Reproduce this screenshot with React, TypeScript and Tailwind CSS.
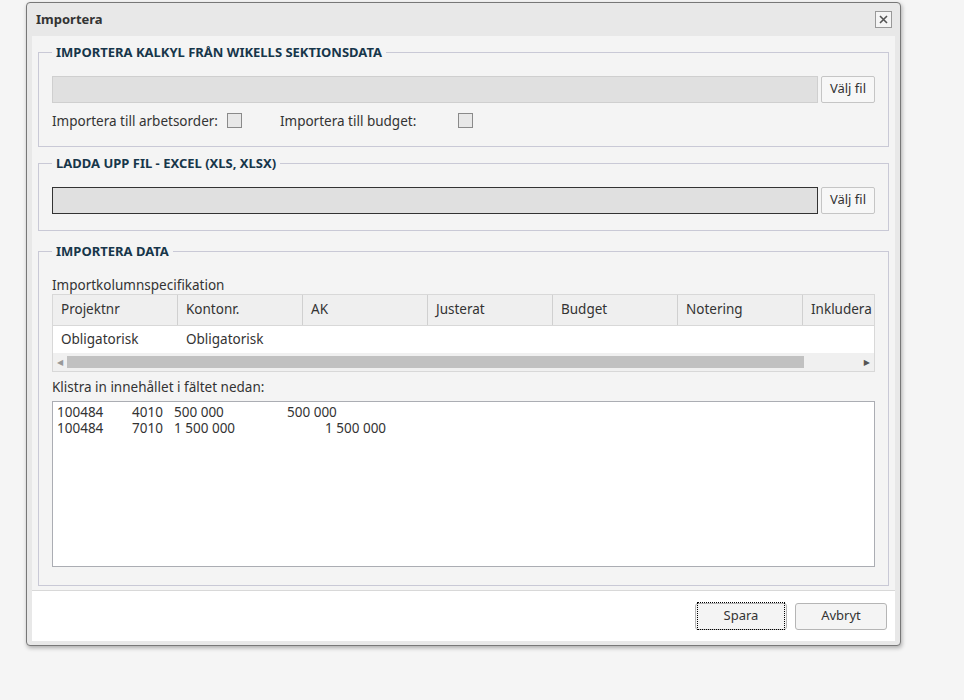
import React from 'react'

const cols = ['Projektnr', 'Kontonr.', 'AK', 'Justerat', 'Budget', 'Notering', 'Inkludera …']

function Fs({ title, className, children }: { title: string; className?: string; children: React.ReactNode }) {
  return (
    <fieldset className={`min-w-0 border border-[#c9c9d6] mx-[6px] px-[13px] ${className ?? ''}`}>
      <legend className="px-[4px] font-bold text-[13px] text-[#17364a]">{title}</legend>
      {children}
    </fieldset>
  )
}

function Btn({ label, focus }: { label: string; focus?: boolean }) {
  return (
    <button className="h-[27px] w-[92px] rounded-[3px] border border-[#b5b5b5] bg-[#f4f4f4] text-[13px] text-[#333] flex items-center justify-center">
      <span className={focus ? 'outline outline-1 outline-dotted outline-black px-[26px] py-[3px]' : ''}>{label}</span>
    </button>
  )
}

function Btn2() {
  return (
    <button className="w-[54px] h-[27px] border border-[#c5c5c5] rounded-[2px] bg-[#f7f7f7] text-[13px] text-[#333]">Välj fil</button>
  )
}

export default function App() {
  return (
    <div className="w-[964px] h-[700px] bg-[#f5f5f5] pt-[2px] pl-[26px]" style={{ fontFamily: '"Noto Sans", "DejaVu Sans", sans-serif' }}>
      <div className="w-[875px] h-[644px] border border-[#777] rounded-[4px] bg-[#e8e8e8] shadow-[1px_2px_4px_rgba(0,0,0,0.3)] flex flex-col">
        <div className="h-[33px] flex items-center justify-between pl-[9px] pr-[8px]">
          <span className="text-[13px] font-bold text-[#333]">Importera</span>
          <span className="w-[17px] h-[17px] border border-[#999] bg-[#f5f5f5] flex items-center justify-center">
            <svg width="9" height="9" viewBox="0 0 9 9"><path d="M1 1L8 8M8 1L1 8" stroke="#555" strokeWidth="1.6" /></svg>
          </span>
        </div>
        <div className="mx-[5px] flex-1 bg-[#f4f4f4] flex flex-col text-[13.5px] text-[#333]">
          <Fs title="IMPORTERA KALKYL FRÅN WIKELLS SEKTIONSDATA" className="mt-[7px] h-[104px] pt-[13px]">
            <div className="flex gap-[3px]">
              <div className="flex-1 h-[27px] bg-[#e0e0e0] border border-[#cfcfcf]" />
              <Btn2 />
            </div>
            <div className="flex items-center mt-[8px]">
              <span>Importera till arbetsorder:</span>
              <span className="ml-[9px] w-[15px] h-[15px] border border-[#8a8a8a] bg-[#e8e8e8]" />
              <span className="ml-[38px]">Importera till budget:</span>
              <span className="ml-[42px] w-[15px] h-[15px] border border-[#8a8a8a] bg-[#e8e8e8]" />
            </div>
          </Fs>
          <Fs title="LADDA UPP FIL - EXCEL (XLS, XLSX)" className="mt-[7px] h-[77px] pt-[13px]">
            <div className="flex gap-[3px]">
              <div className="flex-1 h-[27px] bg-[#e0e0e0] border border-[#333]" />
              <Btn2 />
            </div>
          </Fs>
          <Fs title="IMPORTERA DATA" className="mt-[11px] h-[344px] pt-[14px]">
            <div className="leading-[18px]">Importkolumnspecifikation</div>
            <div className="border border-[#d8d8d8] overflow-hidden">
              <div className="flex bg-[#efefef] h-[31px] border-b border-[#d8d8d8]">
                {cols.map((c, i) => (
                  <div key={c} className={`w-[125px] shrink-0 px-[8px] flex items-center whitespace-nowrap ${i < cols.length - 1 ? 'border-r border-[#d0d0d0]' : ''}`}>{c}</div>
                ))}
              </div>
              <div className="flex bg-white h-[27px] items-center">
                <div className="w-[125px] px-[8px]">Obligatorisk</div>
                <div className="w-[125px] px-[8px]">Obligatorisk</div>
              </div>
              <div className="h-[18px] bg-[#f0f0f0] flex items-center px-[4px] gap-[4px]">
                <span className="text-[8px] text-[#999]">◀</span>
                <div className="w-[737px] h-[12px] bg-[#c1c1c1]" />
                <span className="ml-auto text-[8px] text-[#555]">▶</span>
              </div>
            </div>
            <div className="mt-[6px] leading-[18px]">Klistra in innehållet i fältet nedan:</div>
            <div className="mt-[5px] h-[166px] bg-white border border-[#abadb3] pl-[4px] pt-[2px] leading-[16px] whitespace-nowrap">
              <div className="flex">
                <span className="w-[75px]">100484</span>
                <span className="w-[42px]">4010</span>
                <span className="w-[113px]">500 000</span>
                <span>500 000</span>
              </div>
              <div className="flex">
                <span className="w-[75px]">100484</span>
                <span className="w-[42px]">7010</span>
                <span className="w-[151px]">1 500 000</span>
                <span>1 500 000</span>
              </div>
            </div>
          </Fs>
          <div className="mt-[4px] flex-1 bg-white border-t border-[#d8d8d8] flex items-center justify-end gap-[8px] pr-[8px]">
            <Btn label="Spara" focus />
            <Btn label="Avbryt" />
          </div>
        </div>
        <div className="h-[4px]" />
      </div>
    </div>
  )
}
